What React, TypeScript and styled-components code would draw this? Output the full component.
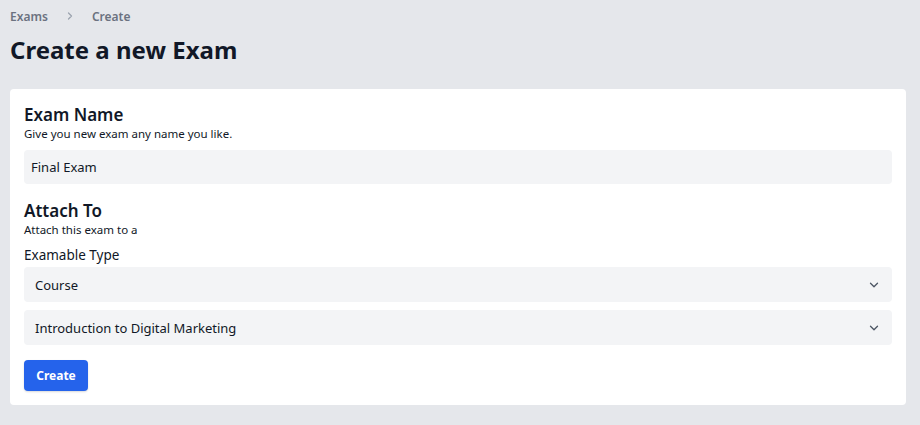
import React from "react";
import styled, { createGlobalStyle } from "styled-components";

const Global = createGlobalStyle`
  html, body { margin: 0; padding: 0; background: #e5e7eb; }
  body { font-family: "Noto Sans", "Open Sans", sans-serif; color: #111827; }
  * { box-sizing: border-box; }
`;

const Page = styled.div`
  width: 920px;
  height: 425px;
  padding: 6px 14px 0 10px;
  background: #e5e7eb;
`;

const Crumbs = styled.nav`
  display: flex;
  align-items: center;
  gap: 16px;
  font-size: 12px;
  font-weight: 600;
  color: #6b7280;
  height: 20px;
`;

const Sep = styled.span`
  display: flex;
  color: #9ca3af;
`;

const Title = styled.h1`
  margin: 7px 0 0;
  font-size: 24px;
  font-weight: 700;
  color: #111827;
  line-height: 34px;
`;

const Card = styled.div`
  margin-top: 22px;
  background: #fff;
  border-radius: 4px;
  padding: 15px 14px 14px;
  display: flex;
  flex-direction: column;
`;

const SectionTitle = styled.h2<{ $top?: number }>`
  margin: ${(p) => p.$top ?? 0}px 0 0;
  font-size: 17px;
  font-weight: 600;
  line-height: 22px;
`;

const Hint = styled.p`
  margin: 0;
  font-size: 11.5px;
  line-height: 16px;
  color: #111827;
`;

const Label = styled.label`
  margin-top: 7px;
  font-size: 13.5px;
  line-height: 20px;
`;

const Field = styled.div<{ $top: number; $h: number; $padL: number }>`
  margin-top: ${(p) => p.$top}px;
  height: ${(p) => p.$h}px;
  background: #f3f4f6;
  border-radius: 4px;
  display: flex;
  align-items: center;
  justify-content: space-between;
  padding: 0 11px 0 ${(p) => p.$padL}px;
  font-size: 13px;
  color: #111827;
`;

const Chevron = () => (
  <svg width="14" height="14" viewBox="0 0 24 24" fill="none" stroke="#4b5563" strokeWidth="2.2" strokeLinecap="round" strokeLinejoin="round">
    <path d="M6 9l6 6 6-6" />
  </svg>
);

const Button = styled.button`
  margin-top: 15px;
  align-self: flex-start;
  width: 64px;
  height: 31px;
  border: none;
  border-radius: 4px;
  background: #2563eb;
  color: #fff;
  font-family: inherit;
  font-size: 12px;
  font-weight: 700;
  box-shadow: 0 1px 2px rgba(0,0,0,0.15);
`;

export default function App() {
  return (
    <>
      <Global />
      <Page>
        <Crumbs>
          <span>Exams</span>
          <Sep>
            <svg width="12" height="12" viewBox="0 0 24 24" fill="none" stroke="currentColor" strokeWidth="2.5" strokeLinecap="round" strokeLinejoin="round"><path d="M9 6l6 6-6 6" /></svg>
          </Sep>
          <span>Create</span>
        </Crumbs>
        <Title>Create a new Exam</Title>
        <Card>
          <SectionTitle>Exam Name</SectionTitle>
          <Hint>Give you new exam any name you like.</Hint>
          <Field $top={8} $h={34} $padL={7}>Final Exam</Field>
          <SectionTitle $top={16}>Attach To</SectionTitle>
          <Hint>Attach this exam to a</Hint>
          <Label>Examable Type</Label>
          <Field $top={2} $h={35} $padL={11}>Course<Chevron /></Field>
          <Field $top={8} $h={35} $padL={11}>Introduction to Digital Marketing<Chevron /></Field>
          <Button>Create</Button>
        </Card>
      </Page>
    </>
  );
}
